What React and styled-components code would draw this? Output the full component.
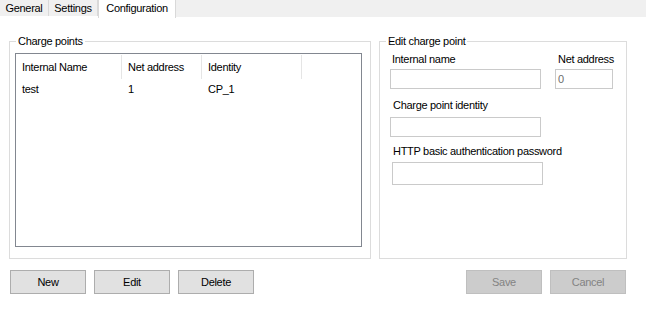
import styled, { createGlobalStyle } from 'styled-components'

const GlobalStyle = createGlobalStyle`
  body {
    margin: 0;
    background: #ffffff;
    font-family: "Liberation Sans", Arial, sans-serif;
    font-size: 11px;
    letter-spacing: -0.3px;
    color: #000000;
  }
`

const Window = styled.div`
  width: 646px;
  height: 317px;
  background: #ffffff;
  overflow: hidden;
`

const TabStrip = styled.div`
  display: flex;
  align-items: flex-start;
  height: 18px;
`

const Tab = styled.div`
  width: ${(p) => p.$width}px;
  height: ${(p) => (p.$active ? 18 : 16)}px;
  box-sizing: border-box;
  display: flex;
  align-items: center;
  justify-content: center;
  background: ${(p) => (p.$active ? '#ffffff' : '#f0f0f0')};
  border-right: 1px solid #d9d9d9;
  border-left: ${(p) => (p.$active ? '1px solid #d9d9d9' : 'none')};
  padding-bottom: ${(p) => (p.$active ? 2 : 0)}px;
`

const TabFill = styled.div`
  flex: 1;
  height: 17px;
  background: #f0f0f0;
`

const Content = styled.div`
  padding: 23px 0 0 9px;
  display: flex;
  flex-direction: column;
  width: 618px;
`

const GroupRow = styled.div`
  display: flex;
  gap: 8px;
`

const GroupBox = styled.div`
  position: relative;
  width: ${(p) => p.$width}px;
  height: 218px;
  box-sizing: border-box;
  border: 1px solid #dcdcdc;
  padding: ${(p) => p.$pad};
`

const GroupTitle = styled.span`
  position: absolute;
  top: -8px;
  left: 6px;
  padding: 0 2px;
  background: #ffffff;
  line-height: 14px;
`

const ListView = styled.div`
  width: 347px;
  height: 194px;
  box-sizing: border-box;
  border: 1px solid #828790;
  background: #ffffff;
`

const ListGrid = styled.div`
  display: grid;
  grid-template-columns: 106px 80px 100px 1fr;
`

const HeaderCell = styled.div`
  height: 23px;
  margin-top: 1px;
  display: flex;
  align-items: center;
  padding-left: ${(p) => p.$pad}px;
  border-right: ${(p) => (p.$last ? 'none' : '1px solid #e5e5e5')};
  padding-bottom: 1px;
`

const Cell = styled.div`
  height: 17px;
  display: flex;
  align-items: center;
  padding-left: ${(p) => p.$pad}px;
  padding-top: 1px;
`

const FieldRow = styled.div`
  display: flex;
  gap: 14px;
  margin-top: ${(p) => p.$top}px;
`

const Field = styled.div`
  display: flex;
  flex-direction: column;
  margin-left: ${(p) => p.$left || 0}px;
`

const Label = styled.label`
  line-height: 14px;
  padding-left: ${(p) => p.$indent}px;
  margin-bottom: ${(p) => p.$gap}px;
  white-space: nowrap;
`

const TextBox = styled.div`
  width: ${(p) => p.$width}px;
  height: ${(p) => p.$height || 20}px;
  box-sizing: border-box;
  border: 1px solid #cacaca;
  background: #ffffff;
  color: #6d6d6d;
  padding-left: 2px;
  display: flex;
  align-items: center;
`

const ButtonRow = styled.div`
  display: flex;
  justify-content: space-between;
  margin-top: 11px;
  padding: 0 1px;
`

const ButtonGroup = styled.div`
  display: flex;
  gap: 8px;
`

const Button = styled.div`
  width: 76px;
  height: 24px;
  box-sizing: border-box;
  display: flex;
  align-items: center;
  justify-content: center;
  background: ${(p) => (p.$disabled ? '#cccccc' : '#e1e1e1')};
  border: 1px solid ${(p) => (p.$disabled ? '#bfbfbf' : '#adadad')};
  color: ${(p) => (p.$disabled ? '#838383' : '#000000')};
`

const columns = [
  { title: 'Internal Name', pad: 6 },
  { title: 'Net address', pad: 6 },
  { title: 'Identity', pad: 6 },
  { title: '', pad: 6, last: true },
]

const rows = [['test', '1', 'CP_1', '']]

export default function App() {
  return (
    <Window>
      <GlobalStyle />
      <TabStrip>
        <Tab $width={49}>General</Tab>
        <Tab $width={49}>Settings</Tab>
        <Tab $width={78} $active>Configuration</Tab>
        <TabFill />
      </TabStrip>
      <Content>
        <GroupRow>
          <GroupBox $width={362} $pad="11px 0 0 5px">
            <GroupTitle>Charge points</GroupTitle>
            <ListView>
              <ListGrid>
                {columns.map((c, i) => (
                  <HeaderCell key={i} $pad={c.pad} $last={c.last}>
                    {c.title}
                  </HeaderCell>
                ))}
                {rows.map((r) =>
                  r.map((v, j) => (
                    <Cell key={j} $pad={columns[j].pad}>
                      {v}
                    </Cell>
                  ))
                )}
              </ListGrid>
            </ListView>
          </GroupBox>
          <GroupBox $width={248} $pad="0 0 0 10px">
            <GroupTitle>Edit charge point</GroupTitle>
            <FieldRow $top={10}>
              <Field>
                <Label $indent={2} $gap={3}>Internal name</Label>
                <TextBox $width={151} />
              </Field>
              <Field>
                <Label $indent={3} $gap={3}>Net address</Label>
                <TextBox $width={58}>0</TextBox>
              </Field>
            </FieldRow>
            <FieldRow $top={9}>
              <Field>
                <Label $indent={3} $gap={5}>Charge point identity</Label>
                <TextBox $width={151} />
              </Field>
            </FieldRow>
            <FieldRow $top={7}>
              <Field $left={2}>
                <Label $indent={1} $gap={4}>HTTP basic authentication password</Label>
                <TextBox $width={151} $height={23} />
              </Field>
            </FieldRow>
          </GroupBox>
        </GroupRow>
        <ButtonRow>
          <ButtonGroup>
            <Button>New</Button>
            <Button>Edit</Button>
            <Button>Delete</Button>
          </ButtonGroup>
          <ButtonGroup>
            <Button $disabled>Save</Button>
            <Button $disabled>Cancel</Button>
          </ButtonGroup>
        </ButtonRow>
      </Content>
    </Window>
  )
}
